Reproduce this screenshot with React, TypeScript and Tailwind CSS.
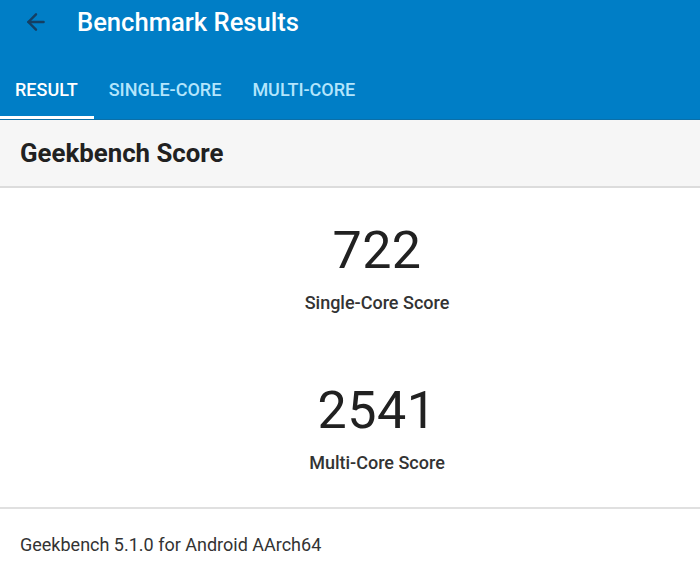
import { ArrowLeft } from 'lucide-react'

const tabs = ['RESULT', 'SINGLE-CORE', 'MULTI-CORE']

const scores = [
  { value: '722', label: 'Single-Core Score' },
  { value: '2541', label: 'Multi-Core Score' },
]

const App = () => {
  return (
    <div className="w-[700px] h-[572px] bg-white overflow-hidden font-['Roboto',sans-serif] text-[#212121]">
      {/* App bar + tabs */}
      <div className="bg-[#007ec6] border-b border-[#0b6fa8]">
        <div className="h-[44px] flex items-center">
          <ArrowLeft className="ml-[23px] w-[26px] h-[26px] text-[#143f63]" strokeWidth={2.25} />
          <h1 className="ml-[28px] text-[25.6px] font-medium text-white">Benchmark Results</h1>
        </div>
        <div className="flex h-[75px]">
          {tabs.map((tab, i) => (
            <div
              key={tab}
              className={`flex items-center justify-center pl-[15px] pr-[16px] pt-[19px] border-b-[3px] text-[18px] font-medium ${
                i === 0 ? 'border-white text-white' : 'border-transparent text-[#b3e5fc]'
              }`}
            >
              {tab}
            </div>
          ))}
        </div>
      </div>

      {/* Section header */}
      <div className="h-[68px] bg-[#f6f6f6] border-b-2 border-[#dcdcdc] flex items-center px-5">
        <h2 className="text-[25.8px] font-bold">Geekbench Score</h2>
      </div>

      {/* Scores */}
      <div className="h-[321px] border-b-2 border-[#e0e0e0] flex flex-col items-center pl-[54px] pt-[23px]">
        {scores.map((s, i) => (
          <div key={s.label} className={`flex flex-col items-center ${i > 0 ? 'mt-[56px]' : ''}`}>
            <div className="text-[52px] leading-[80px] tracking-[0.5px]">{s.value}</div>
            <div className="text-[18px] font-medium leading-[24px] text-[#333]">{s.label}</div>
          </div>
        ))}
      </div>

      {/* Footer */}
      <div className="px-5 pt-[22px] text-[18px] text-[#333]">Geekbench 5.1.0 for Android AArch64</div>
    </div>
  )
}

export default App
